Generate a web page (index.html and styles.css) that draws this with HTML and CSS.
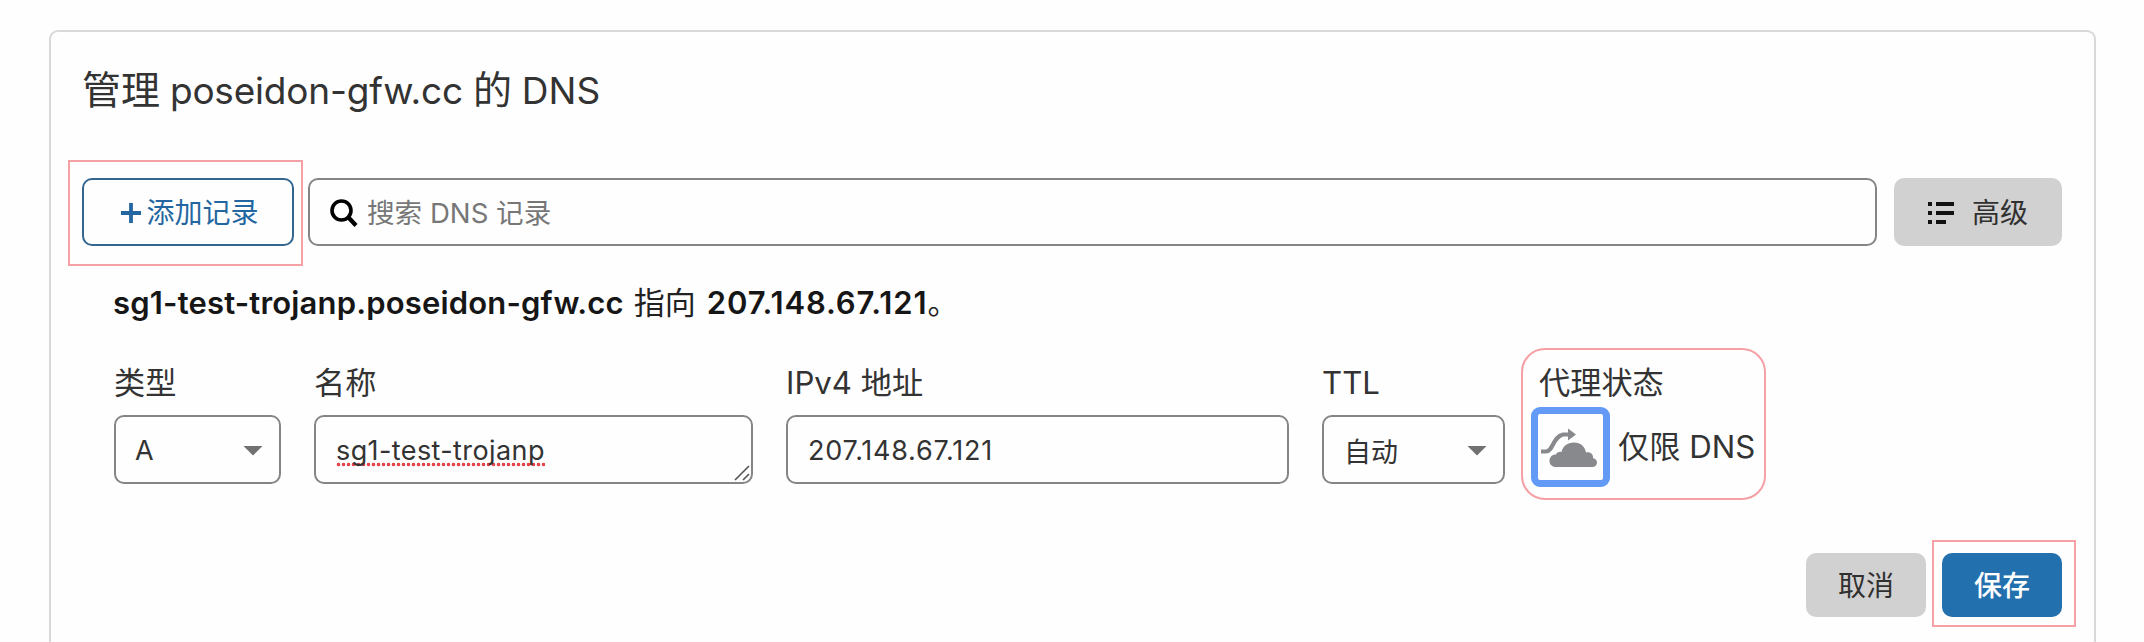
FILE: index.html
```html
<!DOCTYPE html>
<html lang="zh-CN">
<head>
<meta charset="utf-8">
<title>DNS</title>
<link rel="stylesheet" href="styles.css">
</head>
<body>
<main class="card">
  <h1 class="title"><span class="zh">管理</span> <span class="host">poseidon-gfw.cc</span> <span class="zh">的</span> <span class="dns">DNS</span></h1>

  <div class="toolbar">
    <div class="marked mark-add">
      <button class="btn btn-outline">
        <svg class="plus" viewBox="0 0 20 20"><path d="M10 0v20M0 10h20" stroke="currentColor" stroke-width="3.800" fill="none"/></svg>
        <span>添加记录</span>
      </button>
    </div>
    <div class="search">
      <svg class="lens" viewBox="0 0 28 28"><circle cx="11.500" cy="11.500" r="9.500" fill="none" stroke="#000" stroke-width="3.600"/><path d="M18.500 18.500l7.500 8" stroke="#000" stroke-width="4.200"/></svg>
      <span class="placeholder">搜索 DNS 记录</span>
    </div>
    <button class="btn btn-grey btn-advanced">
      <svg class="list" viewBox="0 0 26 24"><path d="M0 1h4v4H0zM8 1h18v4H8zM0 10h4v4H0zM8 10h18v4H8zM0 19h4v4H0zM8 19h10v4H8z" fill="#111"/></svg>
      <span>高级</span>
    </button>
  </div>

  <p class="summary"><b class="summary-host">sg1-test-trojanp.poseidon-gfw.cc</b><span class="points">指向</span><b class="summary-ip">207.148.67.121</b><span>。</span></p>

  <div class="fields">
    <div class="field field-type">
      <label class="label">类型</label>
      <div class="control select"><span class="letter">A</span><i class="caret"></i></div>
    </div>
    <div class="field field-name">
      <label class="label">名称</label>
      <div class="control textarea">
        <span class="misspelt">sg1-test-trojanp</span>
        <svg class="grip" viewBox="0 0 16 16"><path d="M1 15L15 1M9 15l6-6" stroke="#555" stroke-width="1.6" fill="none"/></svg>
      </div>
    </div>
    <div class="field field-ip">
      <label class="label">IPv4 地址</label>
      <div class="control"><span class="ip">207.148.67.121</span></div>
    </div>
    <div class="field field-ttl">
      <label class="label">TTL</label>
      <div class="control select"><span>自动</span><i class="caret"></i></div>
    </div>
    <div class="field field-proxy marked mark-proxy">
      <label class="label">代理状态</label>
      <div class="proxy">
        <button class="toggle">
          <svg class="cloud" viewBox="0 0 60 40">
            <path d="M2 24.500H7C14 24.500 14 9.500 24 7.500H31" fill="none" stroke="#88898c" stroke-width="4.200"/>
            <path d="M29 1.500L37 7.500L29 13.500Z" fill="#88898c"/>
            <path d="M17 40C13 40 10.500 37.500 10.500 34C10.500 30 13 27.500 17 27.500C18 25.500 20 24.500 22.500 25C24 19 28.500 15.500 35 15.500C41.500 15.500 46 19.500 47 25.500C51.500 24.500 54.500 27.500 54 31C56.500 31.500 58 33.500 58 35.500C58 38 56 40 53.500 40Z" fill="#88898c"/>
          </svg>
        </button>
        <span class="proxy-text">仅限 DNS</span>
      </div>
    </div>
  </div>

  <div class="actions">
    <button class="btn btn-grey">取消</button>
    <div class="marked mark-save"><button class="btn btn-primary">保存</button></div>
  </div>
</main>
</body>
</html>
```
FILE: styles.css
```css
* { box-sizing: border-box; }

body {
  margin: 0;
  height: 642px;
  overflow: hidden;
  background: #fefefe;
  color: #333;
  font-family: Inter, "Noto Sans CJK SC", sans-serif;
}

.card {
  height: 612px;
  margin: 30px 48px 0 49px;
  padding: 33px 32px 0 31px;
  border: 2px solid #d9d9d9;
  border-bottom: 0;
  border-radius: 9px 9px 0 0;
}

.title {
  margin: 0;
  height: 50px;
  font-size: 37px;
  font-weight: 400;
  line-height: 50px;
  white-space: nowrap;
  word-spacing: -0.5px;
}
.title .zh { font-size: 39px; }
.title .host { letter-spacing: -0.2px; }

.toolbar {
  display: flex;
  height: 68px;
  margin-top: 63px;
}

.btn {
  display: flex;
  align-items: center;
  justify-content: center;
  padding: 2px 0 0;
  border: 0;
  border-radius: 10px;
  font: 400 28px/40px Inter, "Noto Sans CJK SC", sans-serif;
}
.btn-outline {
  width: 212px;
  height: 68px;
  padding-left: 4px;
  border: 2px solid #34658d;
  background: #fefefe;
  color: #2467a0;
}
.btn-grey { background: #d1d1d1; color: #303030; }
.btn-advanced { width: 168px; margin-left: 17px; }
.btn-primary { background: #2370ae; color: #fff; font-weight: 500; }

.plus { width: 20px; height: 20px; margin-right: 5px; }
.list { width: 26px; height: 24px; margin-right: 18px; }
.lens { width: 28px; height: 28px; margin-right: 9px; }

.search {
  display: flex;
  flex: 1;
  align-items: center;
  margin-left: 14px;
  padding: 2px 0 0 20px;
  border: 2px solid #858585;
  border-radius: 10px;
}
.placeholder { color: #777; font-size: 27.6px; line-height: 40px; }

/* Red callout frames around the highlighted controls */
.marked { position: relative; }
.marked::after {
  content: "";
  position: absolute;
  border: 2px solid #f5a0a4;
  pointer-events: none;
}
.mark-add::after { inset: -18px -9px -20px -14px; }
.mark-proxy::after { inset: -12px -12px -16px -18px; border-radius: 24px; }
.mark-save::after { inset: -13px -14px -10px -10px; }

.summary {
  display: flex;
  height: 44px;
  margin: 35px 0 0 31px;
  color: #222;
  font-size: 31px;
  line-height: 44px;
  white-space: nowrap;
}
.summary b { color: #161616; font-weight: 600; }
.summary-host { letter-spacing: 0.17px; }
.summary-ip { letter-spacing: 0.85px; }
.points { margin: 0 11px 0 10px; }

.fields {
  display: flex;
  height: 124px;
  margin: 35px 0 0 32px;
}
.label {
  display: block;
  height: 55px;
  font-size: 31.2px;
  line-height: 47px;
  white-space: nowrap;
}
.control {
  display: flex;
  position: relative;
  align-items: center;
  height: 69px;
  padding: 2px 0 0 20px;
  border: 2px solid #858585;
  border-radius: 10px;
  font-size: 27px;
}
.select { justify-content: space-between; padding-right: 16px; }
.caret {
  width: 20px;
  height: 10px;
  background: #717171;
  clip-path: polygon(0 0, 100% 0, 50% 100%);
}
.field-type { width: 167px; }
.field-type .control { padding-left: 19px; }
.field-name { width: 439px; margin-left: 33px; }
.field-ip { width: 503px; margin-left: 33px; }
.field-ttl { width: 183px; margin-left: 33px; }
.field-proxy { width: 215px; margin-left: 34px; }

.misspelt {
  letter-spacing: 0.4px;
  background: radial-gradient(circle, #e5474d 1.6px, transparent 2.1px) 0 100% / 5px 5px repeat-x;
}
.ip { letter-spacing: 0.75px; }
.grip {
  position: absolute;
  right: 1px;
  bottom: 1px;
  width: 16px;
  height: 16px;
}

.proxy {
  display: flex;
  align-items: center;
  height: 80px;
  margin: -8px 0 0 -8px;
}
.toggle {
  flex: none;
  width: 79px;
  height: 80px;
  padding: 0;
  border: 7px solid #629af6;
  border-radius: 9px;
  background: #fefefe;
}
.cloud { display: block; width: 60px; height: 40px; margin-left: 1px; }
.proxy-text { margin-left: 8px; font-size: 31.2px; line-height: 44px; white-space: nowrap; }

.actions {
  display: flex;
  justify-content: flex-end;
  gap: 16px;
  margin-top: 69px;
}
.actions .btn { width: 120px; height: 64px; }
```
